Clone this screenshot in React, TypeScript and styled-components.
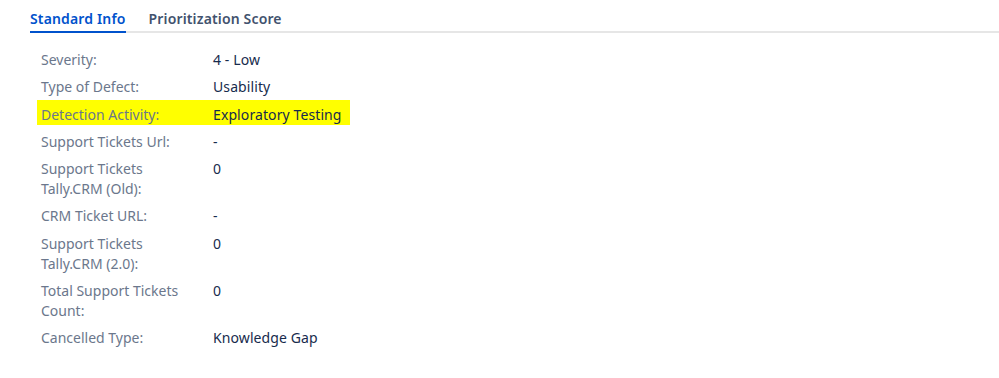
import React from "react";
import styled, { createGlobalStyle } from "styled-components";

const Global = createGlobalStyle`
  html, body { margin: 0; padding: 0; background: #ffffff; }
  body { font-family: "Segoe UI", "Noto Sans", "Open Sans", sans-serif; font-size: 14px; }
`;

const Page = styled.div`
  width: 999px;
  height: 378px;
  background: #fff;
  padding-left: 30px;
  box-sizing: border-box;
  overflow: hidden;
`;

const TabBar = styled.div`
  display: flex;
  gap: 23px;
  border-bottom: 2px solid #e6e6e6;
  height: 31px;
  box-sizing: content-box;
`;

const Tab = styled.div<{ $active?: boolean }>`
  font-size: 14px;
  font-weight: 600;
  line-height: 20px;
  letter-spacing: 0.15px;
  padding-top: 9px;
  height: 22px;
  color: ${(p) => (p.$active ? "#0052cc" : "#42526e")};
  border-bottom: 2px solid ${(p) => (p.$active ? "#0052cc" : "transparent")};
  margin-bottom: -2px;
`;

const List = styled.div`
  display: flex;
  flex-direction: column;
  align-items: flex-start;
  gap: 7.25px;
  padding-top: 17px;
  padding-left: 11px;
`;

const Row = styled.div<{ $highlight?: boolean }>`
  display: grid;
  grid-template-columns: 172px auto;
  line-height: 20px;
  font-size: 14px;
  margin-left: -4px;
  padding: 0 ${(p) => (p.$highlight ? "8px" : "0")} 0 4px;
  background: ${(p) => (p.$highlight ? "#ffff00" : "transparent")};
  ${(p) => (p.$highlight ? "padding-top: 5px; margin-top: -5px;" : "")}
`;

const Label = styled.div`
  color: #6b778c;
  max-width: 152px;
`;

const Value = styled.div`
  color: #172b4d;
  letter-spacing: 0.1px;
`;

const rows: { label: string; value: string; highlight?: boolean }[] = [
  { label: "Severity:", value: "4 - Low" },
  { label: "Type of Defect:", value: "Usability" },
  { label: "Detection Activity:", value: "Exploratory Testing", highlight: true },
  { label: "Support Tickets Url:", value: "-" },
  { label: "Support Tickets Tally.CRM (Old):", value: "0" },
  { label: "CRM Ticket URL:", value: "-" },
  { label: "Support Tickets Tally.CRM (2.0):", value: "0" },
  { label: "Total Support Tickets Count:", value: "0" },
  { label: "Cancelled Type:", value: "Knowledge Gap" },
];

export default function App() {
  return (
    <>
      <Global />
      <Page>
        <TabBar>
          <Tab $active>Standard Info</Tab>
          <Tab>Prioritization Score</Tab>
        </TabBar>
        <List>
          {rows.map((r) => (
            <Row key={r.label} $highlight={r.highlight}>
              <Label>{r.label}</Label>
              <Value>{r.value}</Value>
            </Row>
          ))}
        </List>
      </Page>
    </>
  );
}
